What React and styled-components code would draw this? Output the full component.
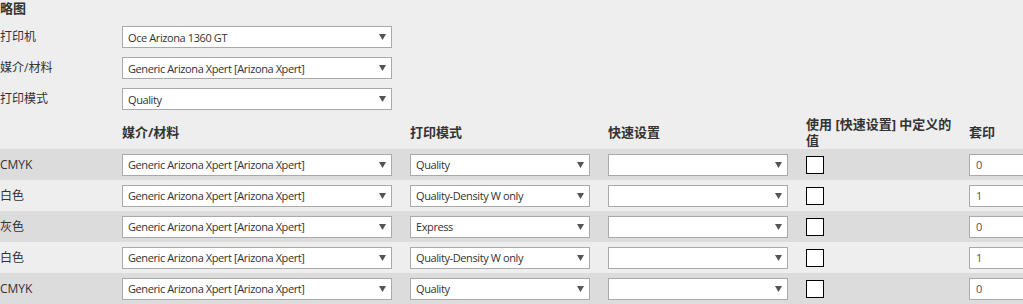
import React from "react";
import styled, { createGlobalStyle } from "styled-components";

const Global = createGlobalStyle`
  html, body { margin: 0; padding: 0; background: #eeeeee; overflow: hidden; }
  body {
    font-family: "Open Sans", "Noto Sans CJK SC", sans-serif;
    color: #333;
    font-size: 12px;
  }
`;

const Page = styled.div`
  width: 1023px;
  height: 304px;
  overflow: hidden;
  background: #eeeeee;
`;

const Title = styled.div`
  font-weight: bold;
  font-size: 13px;
  line-height: 16px;
  height: 17px;
  color: #333;
`;

const Form = styled.div`
  display: flex;
  flex-direction: column;
  gap: 9px;
  padding-top: 9px;
`;

const FormRow = styled.div`
  display: grid;
  grid-template-columns: 122px 270px;
  align-items: center;
  height: 22px;
`;

const Label = styled.div`
  font-size: 12px;
  line-height: 16px;
  color: #333;
  white-space: nowrap;
`;

const SelectBox = styled.div`
  box-sizing: border-box;
  height: 22px;
  width: ${(p) => p.$w}px;
  background: #fff;
  border: 1px solid #a9a9a9;
  display: flex;
  align-items: center;
  padding: 0 5px 0 5px;
  font-size: 11px;
  letter-spacing: -0.4px;
  color: #333;
  white-space: nowrap;
`;

const SelectText = styled.span`
  flex: 1;
  overflow: hidden;
`;

const Arrow = styled.svg`
  flex: none;
  width: 7px;
  height: 6px;
`;

const Select = ({ value, w = 270 }) => (
  <SelectBox $w={w}>
    <SelectText>{value}</SelectText>
    <Arrow viewBox="0 0 7 6">
      <path d="M0 0 H7 L3.5 6 Z" fill="#555" />
    </Arrow>
  </SelectBox>
);

const grid = `
  display: grid;
  grid-template-columns: 104px 270px 180px 180px 145px 80px;
  column-gap: 18px;
  align-items: center;
`;

const HeaderRow = styled.div`
  ${grid}
  margin-top: 5px;
  height: 34px;
`;

const Th = styled.div`
  font-weight: bold;
  font-size: 13px;
  line-height: 16px;
  color: #333;
  white-space: nowrap;
`;

const Row = styled.div`
  ${grid}
  height: 31px;
  background: ${(p) => (p.$dark ? "#dcdcdc" : "#eeeeee")};
`;

const Check = styled.div`
  box-sizing: border-box;
  width: 18px;
  height: 18px;
  margin-top: 1px;
  background: #fff;
  border: 1px solid #000;
`;

const NumInput = styled.div`
  box-sizing: border-box;
  width: 80px;
  height: 22px;
  background: #fff;
  border: 1px solid #a9a9a9;
  display: flex;
  align-items: center;
  padding-left: 6px;
  font-size: 11px;
  color: #555;
`;

const MEDIA = "Generic Arizona Xpert [Arizona Xpert]";

const rows = [
  { label: "CMYK", mode: "Quality", n: "0" },
  { label: "白色", mode: "Quality-Density W only", n: "1" },
  { label: "灰色", mode: "Express", n: "0" },
  { label: "白色", mode: "Quality-Density W only", n: "1" },
  { label: "CMYK", mode: "Quality", n: "0" },
];

export default function App() {
  return (
    <Page>
      <Global />
      <Title>略图</Title>
      <Form>
        <FormRow>
          <Label>打印机</Label>
          <Select value="Oce Arizona 1360 GT" />
        </FormRow>
        <FormRow>
          <Label>媒介/材料</Label>
          <Select value={MEDIA} />
        </FormRow>
        <FormRow>
          <Label>打印模式</Label>
          <Select value="Quality" />
        </FormRow>
      </Form>
      <HeaderRow>
        <span />
        <Th>媒介/材料</Th>
        <Th>打印模式</Th>
        <Th>快速设置</Th>
        <Th>
          使用 [快速设置] 中定义的
          <br />值
        </Th>
        <Th>套印</Th>
      </HeaderRow>
      {rows.map((r, i) => (
        <Row key={i} $dark={i % 2 === 0}>
          <Label>{r.label}</Label>
          <Select value={MEDIA} />
          <Select value={r.mode} w={180} />
          <Select value="" w={180} />
          <Check />
          <NumInput>{r.n}</NumInput>
        </Row>
      ))}
    </Page>
  );
}
